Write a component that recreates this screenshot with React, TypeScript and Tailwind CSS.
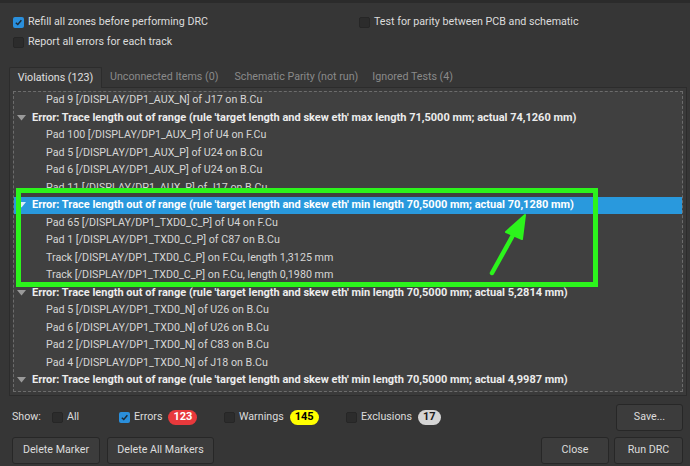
type Row = { kind: "error" | "item"; text: string; selected?: boolean };

const ERR = "Error: Trace length out of range (rule 'target length and skew eth' ";

const rows: Row[] = [
  { kind: "item", text: "Pad 9 [/DISPLAY/DP1_AUX_N] of J17 on B.Cu" },
  { kind: "error", text: ERR + "max length 71,5000 mm; actual 74,1260 mm)" },
  { kind: "item", text: "Pad 100 [/DISPLAY/DP1_AUX_P] of U4 on F.Cu" },
  { kind: "item", text: "Pad 5 [/DISPLAY/DP1_AUX_P] of U24 on B.Cu" },
  { kind: "item", text: "Pad 6 [/DISPLAY/DP1_AUX_P] of U24 on B.Cu" },
  { kind: "item", text: "Pad 11 [/DISPLAY/DP1_AUX_P] of J17 on B.Cu" },
  { kind: "error", text: ERR + "min length 70,5000 mm; actual 70,1280 mm)", selected: true },
  { kind: "item", text: "Pad 65 [/DISPLAY/DP1_TXD0_C_P] of U4 on F.Cu" },
  { kind: "item", text: "Pad 1 [/DISPLAY/DP1_TXD0_C_P] of C87 on B.Cu" },
  { kind: "item", text: "Track [/DISPLAY/DP1_TXD0_C_P] on F.Cu, length 1,3125 mm" },
  { kind: "item", text: "Track [/DISPLAY/DP1_TXD0_C_P] on F.Cu, length 0,1980 mm" },
  { kind: "error", text: ERR + "min length 70,5000 mm; actual 5,2814 mm)" },
  { kind: "item", text: "Pad 5 [/DISPLAY/DP1_TXD0_N] of U26 on B.Cu" },
  { kind: "item", text: "Pad 6 [/DISPLAY/DP1_TXD0_N] of U26 on B.Cu" },
  { kind: "item", text: "Pad 2 [/DISPLAY/DP1_TXD0_N] of C83 on B.Cu" },
  { kind: "item", text: "Pad 4 [/DISPLAY/DP1_TXD0_N] of J18 on B.Cu" },
  { kind: "error", text: ERR + "min length 70,5000 mm; actual 4,9987 mm)" },
];

function CheckBox({ checked }: { checked?: boolean }) {
  return checked ? (
    <span className="flex h-[11px] w-[11px] shrink-0 items-center justify-center rounded-[2px] bg-[#2a8fdc]">
      <svg width="9" height="9" viewBox="0 0 10 10">
        <path d="M2 5.2 L4.2 7.3 L8.2 2.6" fill="none" stroke="#1d2a36" strokeWidth="1.6" />
      </svg>
    </span>
  ) : (
    <span className="h-[11px] w-[11px] shrink-0 rounded-[2px] border border-[#262626] bg-[#2c2c2c]" />
  );
}

function Check({ checked, label }: { checked?: boolean; label: string }) {
  return (
    <div className="flex h-[20px] items-center gap-[4px]">
      <CheckBox checked={checked} />
      <span className="whitespace-nowrap">{label}</span>
    </div>
  );
}

function Button({ label, w }: { label: string; w: string }) {
  return (
    <button
      type="button"
      className={`flex h-[27px] ${w} items-center justify-center rounded-[3px] border border-[#272727] bg-[#3c3c3c] text-[#dcdcdc]`}
    >
      {label}
    </button>
  );
}

function Badge({ value, color }: { value: string; color: string }) {
  return (
    <span className={`flex h-[15px] items-center justify-center rounded-full px-[5px] text-[11px] font-bold ${color}`}>
      {value}
    </span>
  );
}

export default function App() {
  return (
    <div
      className="relative flex h-[466px] w-[690px] flex-col overflow-hidden bg-[#363636] text-[10.7px] text-[#dcdcdc]"
      style={{ fontFamily: "Roboto, 'Noto Sans', sans-serif" }}
    >
      <div className="h-[3px] bg-[#2b2b2b]" />

      <div className="mt-[9px] flex pl-[13px]">
        <div className="w-[346px]">
          <Check checked label="Refill all zones before performing DRC" />
          <Check label="Report all errors for each track" />
        </div>
        <div>
          <Check label="Test for parity between PCB and schematic" />
        </div>
      </div>

      <div className="mt-[15px] flex h-[20px] pl-[9px]">
        <div className="relative z-10 flex h-[21px] w-[93px] items-center justify-center rounded-t-[2px] border border-b-0 border-[#2c2c2c] bg-[#3a3a3a] text-[#e0e0e0]">
          Violations (123)
        </div>
        <div className="ml-[8px] flex items-center text-[#8a8a8a]">Unconnected Items (0)</div>
        <div className="ml-[16px] flex items-center text-[#8a8a8a]">Schematic Parity (not run)</div>
        <div className="ml-[14px] flex items-center text-[#8a8a8a]">Ignored Tests (4)</div>
      </div>

      <div className="ml-[9px] h-[309px] w-[678px] border border-[#2c2c2c] bg-[#3a3a3a] p-[3px]">
        <div className="relative h-full overflow-hidden border border-dashed border-[#6c6c6c] bg-[#404040]">
          <div className="-mt-[0.5px]">
            {rows.map((r, i) => (
              <div
                key={i}
                className={`flex h-[17.5px] items-center whitespace-nowrap ${r.selected ? "bg-[#2999dd] text-white" : ""}`}
              >
                {r.kind === "error" ? (
                  <>
                    <span className="ml-[3px] w-[15px]">
                      <svg width="9" height="6" viewBox="0 0 9 6">
                        <path d="M0 0 L9 0 L4.5 5.5 Z" fill={r.selected ? "#d8ecf9" : "#9a9a9a"} />
                      </svg>
                    </span>
                    <span className={`text-[11px] font-bold ${r.selected ? "text-white" : "text-[#ececec]"}`}>{r.text}</span>
                  </>
                ) : (
                  <span className="ml-[32px] text-[#d6d6d6]">{r.text}</span>
                )}
              </div>
            ))}
          </div>
        </div>
      </div>

      <div className="mt-[6px] flex h-[30px] items-center pl-[12px] pr-[7px]">
        <span className="w-[40px]">Show:</span>
        <div className="w-[67px]">
          <Check label="All" />
        </div>
        <div className="flex w-[105px] items-center gap-[6px]">
          <Check checked label="Errors" />
          <Badge value="123" color="bg-[#e8393c] text-white" />
        </div>
        <div className="flex w-[122px] items-center gap-[6px]">
          <Check label="Warnings" />
          <Badge value="145" color="bg-[#ffff00] text-black" />
        </div>
        <div className="flex items-center gap-[6px]">
          <Check label="Exclusions" />
          <Badge value="17" color="bg-[#d4d4d4] text-[#1a1a1a]" />
        </div>
        <div className="ml-auto">
          <Button label="Save..." w="w-[67px]" />
        </div>
      </div>

      <div className="mt-[5px] flex pl-[12px] pr-[7px]">
        <Button label="Delete Marker" w="w-[88px]" />
        <div className="ml-[7px]">
          <Button label="Delete All Markers" w="w-[107px]" />
        </div>
        <div className="ml-auto flex gap-[5px]">
          <Button label="Close" w="w-[68px]" />
          <Button label="Run DRC" w="w-[69px]" />
        </div>
      </div>

      {/* annotation: green highlight box and arrow */}
      <div className="pointer-events-none absolute left-[16px] top-[188px] h-[99px] w-[582px] border-[5px] border-[#2cf41c]" />
      <svg className="pointer-events-none absolute left-0 top-0" width="690" height="466">
        <line x1="492" y1="273" x2="517" y2="228" stroke="#2cf41c" strokeWidth="4.5" strokeLinecap="round" />
        <path d="M525 215 L506 232 L522 239 Z" fill="#2cf41c" stroke="#2cf41c" strokeWidth="2" strokeLinejoin="round" />
      </svg>
    </div>
  );
}
